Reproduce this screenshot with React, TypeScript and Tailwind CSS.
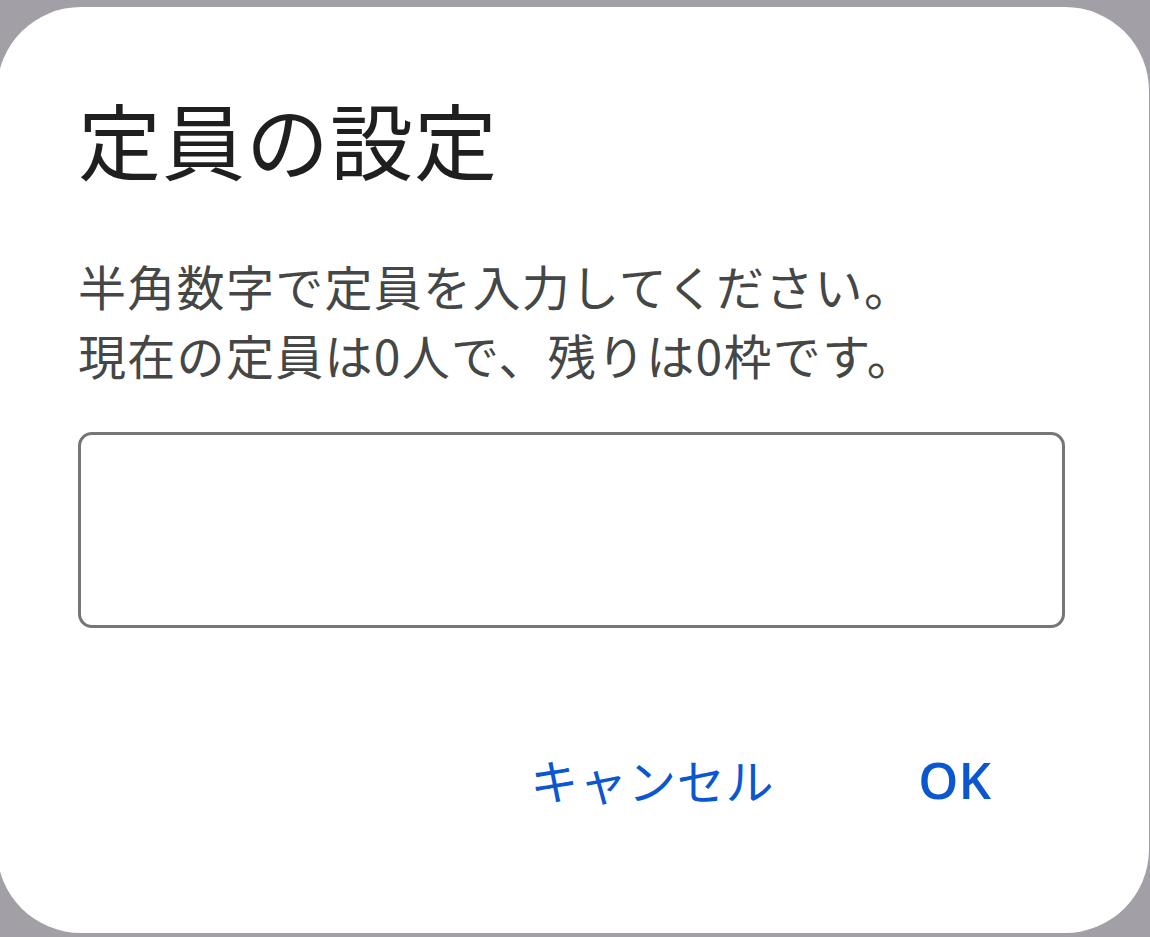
import React from "react";

export default function App() {
  return (
    <div className="w-[1150px] h-[937px] bg-[#a29fa6] pt-[7px] overflow-hidden" style={{ fontFamily: '"Noto Sans CJK JP", "Noto Sans", sans-serif' }}>
      <div className="ml-[-3px] w-[1152px] h-[926px] bg-white rounded-[84px] pl-[81px] pr-[84px] pt-[90px] flex flex-col">
        <h1 className="text-[83px] leading-none tracking-[1px] text-[#1f1f1f] font-normal">定員の設定</h1>
        <div className="mt-[71px] text-[48px] leading-[69px] tracking-[1.3px] text-[#444746]">
          <p>半角数字で定員を入力してください。</p>
          <p>現在の定員は0人で、残りは0枠です。</p>
        </div>
        <div className="mt-[43px] h-[196px] border-[3px] border-[#767676] rounded-[14px]"></div>
        <div className="mt-[113px] flex justify-end items-center gap-[144px] pr-[74px] text-[48px] text-[#0b57d0]">
          <span className="font-normal tracking-[0.8px]">キャンセル</span>
          <span className="font-semibold text-[51px]" style={{ fontFamily: '"Open Sans", "Noto Sans", sans-serif' }}>OK</span>
        </div>
      </div>
    </div>
  );
}
